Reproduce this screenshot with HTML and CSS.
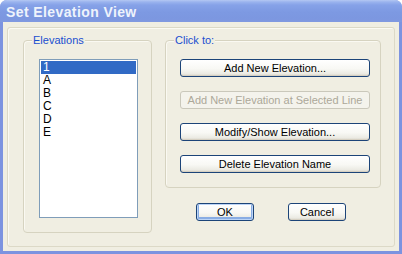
FILE: index.html
```html
<!DOCTYPE html>
<html lang="en">
    <head>
        <link rel="stylesheet" href="styles.css">
    </head>
    <body>
        <div class="window">
            <div class="titlebar"><span>Set Elevation View</span></div>
            <div class="client">
                <div class="frame">
                    <div class="group group-list">
                        <span class="legend">Elevations</span>
                        <ul class="listbox">
                            <li class="selected">1</li>
                            <li>A</li>
                            <li>B</li>
                            <li>C</li>
                            <li>D</li>
                            <li>E</li>
                        </ul>
                    </div>
                    <div class="side">
                        <div class="group group-actions">
                            <span class="legend">Click to:</span>
                            <button class="btn wide">Add New Elevation...</button>
                            <button class="btn wide" disabled>Add New Elevation at Selected Line</button>
                            <button class="btn wide">Modify/Show Elevation...</button>
                            <button class="btn wide">Delete Elevation Name</button>
                        </div>
                        <div class="footer">
                            <button class="btn small default">OK</button>
                            <button class="btn small">Cancel</button>
                        </div>
                    </div>
                </div>
            </div>
        </div>
    </body>
</html>
```

FILE: styles.css
```css
* {
    box-sizing: border-box;
}

body {
    margin: 0px;
    padding: 0px;
    background-color: #ffffff;
    font-family: "Liberation Sans", Arial, sans-serif;
    font-size: 11px;
}

.window {
    width: 402px;
    height: 254px;
    background: #7c93e0;
    border-radius: 7px 7px 0 0;
    padding: 0 3px 3px 3px;
    display: flex;
    flex-direction: column;
}

.titlebar {
    height: 22px;
    margin: 0 -3px;
    padding: 0 6px;
    border-radius: 7px 7px 0 0;
    background: linear-gradient(to bottom, #b4c8f3 0px, #9ab3ee 2px, #86a2e8 5px, #7d99e2 12px, #7c97e0 19px, #8199e0 22px);
    display: flex;
    align-items: center;
}

.titlebar span {
    color: #eef3fc;
    font-weight: bold;
    font-size: 14px;
    letter-spacing: 0.4px;
    padding-top: 1px;
}

.client {
    flex: 1;
    background-color: #f0eee2;
    padding: 5px 4px 4px 4px;
    display: flex;
}

.frame {
    flex: 1;
    border: 1px solid #dcd9c7;
    box-shadow: inset 1px 1px 0 #fbfaf3;
    border-radius: 3px;
    padding: 12px 13px 0 15px;
    display: flex;
    gap: 13px;
}

.group {
    position: relative;
    border: 1px solid #d6d3c0;
    box-shadow: inset 1px 1px 0 #faf9f2;
    border-radius: 4px;
}

.legend {
    position: absolute;
    top: -7px;
    left: 8px;
    padding: 0 1px;
    line-height: 13px;
    color: #1a4fd0;
    background-color: #f0eee2;
}

.group-list {
    width: 129px;
    height: 193px;
    padding: 18px 13px 0 15px;
}

.listbox {
    list-style: none;
    margin: 0;
    padding: 1px;
    width: 99px;
    height: 159px;
    border: 1px solid #7f9db9;
    background-color: #ffffff;
    font-size: 12px;
}

.listbox li {
    height: 13px;
    line-height: 13px;
    padding-left: 2px;
    color: #000000;
}

.listbox li.selected {
    background-color: #316ac5;
    color: #ffffff;
}

.side {
    display: flex;
    flex-direction: column;
}

.group-actions {
    width: 216px;
    height: 148px;
    padding: 18px 0 0 14px;
    display: flex;
    flex-direction: column;
    gap: 14px;
}

.btn {
    font-family: "Liberation Sans", Arial, sans-serif;
    font-size: 11px;
    color: #000000;
    height: 18px;
    padding: 0;
    border: 1px solid #1c4478;
    border-radius: 3px;
    background: linear-gradient(to bottom, #ffffff 0%, #f8f8f4 55%, #ecebe4 85%, #d8d5c8 100%);
    box-shadow: inset 0 -1px 0 #d6d0c2;
}

.btn.wide {
    width: 190px;
}

.btn:disabled {
    color: #aca899;
    border-color: #cac8bb;
    background: #f4f3ec;
    box-shadow: none;
}

.footer {
    display: flex;
    gap: 34px;
    padding: 15px 0 0 31px;
}

.btn.small {
    width: 58px;
}

.btn.default {
    box-shadow: inset 0 0 0 1px #bcd4f6, inset 0 -1px 0 2px #89ade4;
}
```
